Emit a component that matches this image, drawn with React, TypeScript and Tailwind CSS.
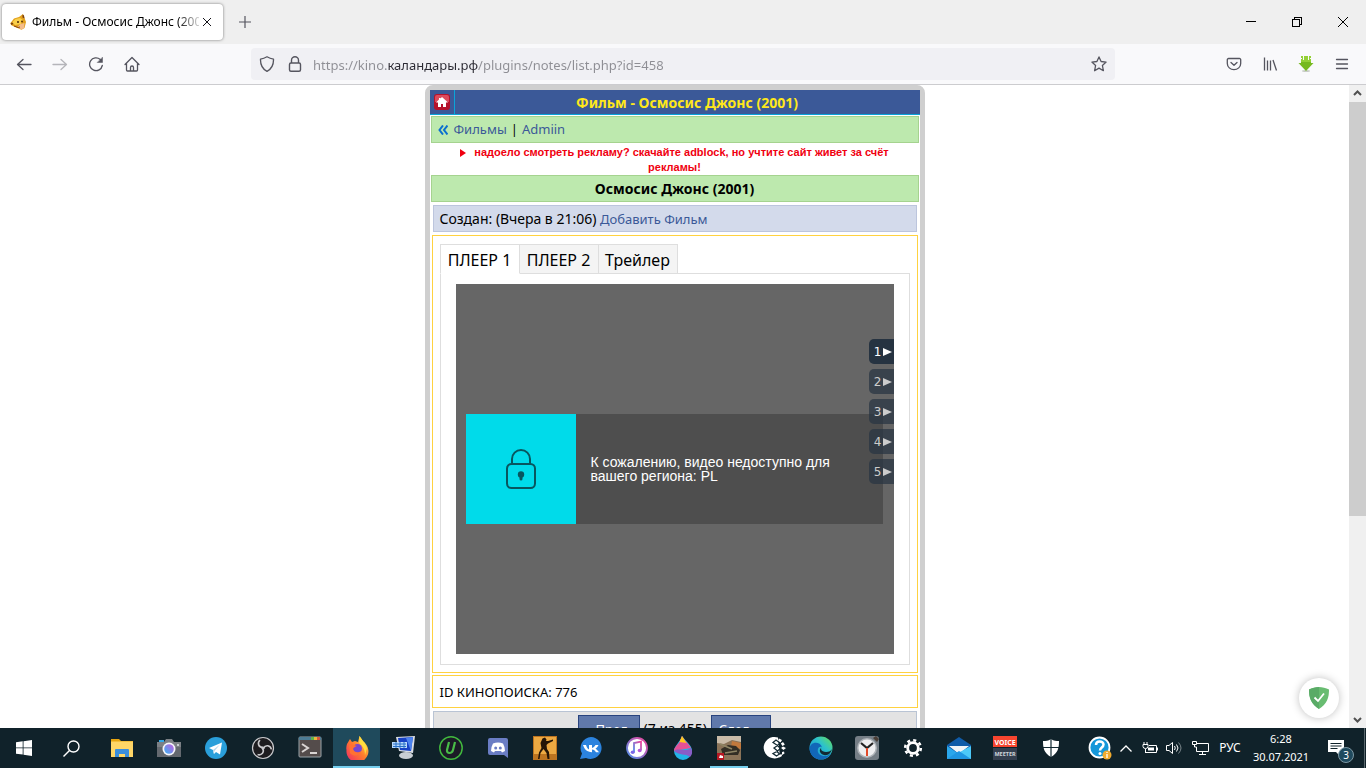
import type { ReactNode } from 'react';
import { clsx } from 'clsx';

const playerTabs = ['ПЛЕЕР 1', 'ПЛЕЕР 2', 'Трейлер'];
const sources = [1, 2, 3, 4, 5];

function ToolbarButton({ label, dim, children }: { label: string; dim?: boolean; children: ReactNode }) {
  return (
    <button aria-label={label} className={clsx('flex h-8 w-8 items-center justify-center rounded', dim ? 'text-[#b5b5ba]' : 'text-[#55555f]')}>
      <svg viewBox="0 0 16 16" className="h-4 w-4" fill="none" stroke="currentColor" strokeWidth="1.3" strokeLinecap="round" strokeLinejoin="round">
        {children}
      </svg>
    </button>
  );
}

function WindowButton({ label, children }: { label: string; children: ReactNode }) {
  return (
    <button aria-label={label} className="flex w-[46px] items-center justify-center">
      <svg viewBox="0 0 10 10" className="h-2.5 w-2.5" fill="none" stroke="#000" shapeRendering="crispEdges">
        {children}
      </svg>
    </button>
  );
}

function TabStrip() {
  return (
    <div className="flex h-11 shrink-0 items-stretch bg-[#efefef]">
      <div className="my-1 ml-0.5 flex w-[221px] items-center rounded bg-white pl-2 pr-2 shadow-[0_0_3px_rgba(0,0,0,0.5)]">
        <svg viewBox="0 0 16 16" className="mr-1.5 h-4 w-4 shrink-0">
          <path d="M.5 9 4 4.500 9 3l4-3 1.500 4L16 8l-1.500 6-3 1.800L4 12.500 1 11z" fill="#e2a01c" />
          <path d="M2 8.500 5.500 5 10 4l3 2-2 4-6 1z" fill="#f9cf4b" />
          <path d="m10.500 10 4-1-.5 5-2.500 1.500-4-2.500z" fill="#f4bd8d" />
          <path d="m12.500.5 1.500 1 .5 3-2-1zM.5 9l2-.5 1 1.500-2 1z" fill="#7a3d10" />
          <circle cx="8" cy="8" r="1" fill="#4a2508" /><circle cx="12" cy="7.500" r=".9" fill="#4a2508" />
          <path d="m4 12 4 1.500 2-.5" stroke="#8a4510" fill="none" />
        </svg>
        <span className="flex-1 overflow-hidden whitespace-nowrap bg-[linear-gradient(90deg,#000_145px,transparent_172px)] bg-clip-text text-[12px] leading-4 text-transparent">
          Фильм - Осмосис Джонс (2001)
        </span>
        <button aria-label="Закрыть вкладку" className="flex h-4 w-4 items-center justify-center">
          <svg viewBox="0 0 8 8" className="h-2 w-2" stroke="#15141a" fill="none"><path d="m0 0 8 8M8 0 0 8" /></svg>
        </button>
      </div>
      <button aria-label="Новая вкладка" className="ml-1.5 flex w-8 items-center justify-center">
        <svg viewBox="0 0 12 12" className="h-3 w-3" stroke="#55555f" strokeWidth="1.2"><path d="M6 0v12M0 6h12" /></svg>
      </button>
      <div className="ml-auto flex">
        <WindowButton label="Свернуть"><path d="M0 4.500h10" /></WindowButton>
        <WindowButton label="Восстановить"><path d="M.5 2.500h7v7h-7zM2.500 2.500v-2h7v7h-2" /></WindowButton>
        <WindowButton label="Закрыть"><path d="m0 0 10 10M10 0 0 10" shapeRendering="auto" /></WindowButton>
      </div>
    </div>
  );
}

function Toolbar() {
  return (
    <div className="flex h-[41px] shrink-0 items-center border-b border-[#cccccf] bg-[#f9f9fb] px-2">
      <div className="flex gap-1">
        <ToolbarButton label="Назад"><path d="M15 8.500H1.500M7 3.500 1.500 8.500 7 13.500" /></ToolbarButton>
        <ToolbarButton label="Вперёд" dim><path d="M1 8.500h13.500M9 3.500 14.500 8.500 9 13.500" /></ToolbarButton>
        <ToolbarButton label="Обновить">
          <path d="M14.300 9.500a6.400 6.400 0 1 1-2-6" />
          <path d="M14.500 1.500v5h-5z" fill="currentColor" strokeWidth=".5" />
        </ToolbarButton>
        <ToolbarButton label="Домой">
          <path d="M1 8.500 8 1.500l7 7M2.500 7.500V14a1 1 0 0 0 1 1h9a1 1 0 0 0 1-1V7.500M6.500 15v-3.500a1.500 1.500 0 0 1 3 0V15" />
        </ToolbarButton>
      </div>
      <div className="mx-[103px] flex h-8 flex-1 items-center rounded bg-[#f0f0f4]">
        <button aria-label="Защита" className="flex h-8 w-8 items-center justify-center text-[#55555f]">
          <svg viewBox="0 0 16 16" className="h-4 w-4" fill="none" stroke="currentColor" strokeWidth="1.3" strokeLinejoin="round">
            <path d="M8 .8c2.500 1.500 4.200 2 6.500 2.300C14.700 8.500 12.500 13 8 15.300 3.500 13 1.300 8.500 1.500 3.100 3.800 2.800 5.500 2.300 8 .8z" />
          </svg>
        </button>
        <button aria-label="Соединение" className="flex h-8 w-6 items-center justify-center text-[#55555f]">
          <svg viewBox="0 0 16 16" className="h-4 w-4" fill="none" stroke="currentColor" strokeWidth="1.4">
            <rect x="2.500" y="7" width="11" height="8.300" rx="1.500" /><path d="M4.500 7V4.200a3.500 3.500 0 0 1 7 0V7" />
          </svg>
        </button>
        <input
          aria-label="Адрес"
          readOnly
          value="https://kino.каландары.рф/plugins/notes/list.php?id=458"
          className="ml-1.5 h-8 min-w-0 flex-1 bg-[linear-gradient(90deg,#8e8e94_74px,#2b2a33_74px,#2b2a33_165px,#8e8e94_165px)] bg-clip-text pt-0.5 text-[13px] text-transparent outline-none"
        />
        <button aria-label="В закладки" className="flex h-8 w-8 items-center justify-center text-[#55555f]">
          <svg viewBox="0 0 16 16" className="h-4 w-4" fill="none" stroke="currentColor" strokeWidth="1.300" strokeLinejoin="round">
            <path d="m8 .9 2.100 4.600 5 .6-3.700 3.400 1 5.200L8 12.100l-4.400 2.600 1-5.200L.9 6.100l5-.6z" />
          </svg>
        </button>
      </div>
      <div className="flex gap-1">
        <ToolbarButton label="Pocket">
          <path d="M2.500 2.500h11a1.200 1.200 0 0 1 1.200 1.200V7.500a6.700 6.200 0 0 1-13.400 0V3.700A1.200 1.200 0 0 1 2.500 2.500zM5 6.500l3 2.800 3-2.800" />
        </ToolbarButton>
        <ToolbarButton label="Библиотека"><path d="M2.500 1.500v13M5.500 4.500v10M8.500 4.500v10M11 4l3.500 10.500" strokeLinecap="butt" /></ToolbarButton>
        <button aria-label="Загрузчик" className="flex h-8 w-8 items-center justify-center">
          <svg viewBox="0 0 16 16" className="h-4 w-4">
            <ellipse cx="8" cy="15" rx="4" ry="1" fill="#c7ccc5" />
            <path d="M3 0h10v7h2.500L8 15 .5 7H3z" fill="#76b91f" />
            <path d="M3 0h10v6H3z" fill="#94d036" />
            <path d="M5.500 0v4M10.500 0v4M1 2.500h3M12 2.500h3" stroke="#f9f9fb" />
          </svg>
        </button>
        <ToolbarButton label="Меню"><path d="M2.500 3.500h11M2.500 8h11M2.500 12.500h11" /></ToolbarButton>
      </div>
    </div>
  );
}

function Player() {
  return (
    <div className="relative flex h-[370px] items-center bg-[#666] pl-2.5 pr-[11px]">
      <div className="flex h-[110px] flex-1 items-center bg-[#4e4e4e]">
        <div className="flex h-[110px] w-[110px] shrink-0 items-center justify-center bg-[#00dbea]">
          <svg viewBox="0 0 30 40" className="h-10 w-[30px]" fill="none" stroke="#08565f" strokeWidth="2">
            <rect x="1" y="15" width="28" height="24" rx="4.500" />
            <path d="M6 15V10a9 9 0 0 1 18 0v5" />
            <circle cx="15" cy="25.500" r="3.200" fill="#08565f" stroke="none" />
            <path d="M15 26v4" strokeWidth="3" strokeLinecap="round" />
          </svg>
        </div>
        <p className="px-[15px] font-['Liberation_Sans',Arial,sans-serif] text-[14px] leading-[14px] text-white">
          К сожалению, видео недоступно для вашего региона: PL
        </p>
      </div>
      <div className="absolute right-0 top-[55px] flex flex-col gap-[5px]">
        {sources.map((n) => (
          <button
            key={n}
            className={clsx(
              "flex h-[25px] w-[25px] items-center justify-end gap-px rounded-l-[5px] pr-0.5 font-['DejaVu_Sans',sans-serif] text-[12px] leading-4",
              n === 1 ? 'bg-[#263341] text-white' : 'bg-[#263341]/70 text-[#ccc]',
            )}
          >
            {n}
            <svg viewBox="0 0 9 8" className="h-2 w-[9px]" fill="currentColor"><path d="M0 0 9 4 0 8z" /></svg>
          </button>
        ))}
      </div>
    </div>
  );
}

function FilmPage() {
  return (
    <div className="w-[500px] shrink-0 self-start rounded-t-[8px] border-[5px] border-[#cfcfcf] bg-white font-['Noto_Sans',Tahoma,sans-serif] text-[14px] leading-[17px] text-black">
      <header className="flex h-[25px] items-stretch border-b border-[#0aa5d8] bg-[#3b5998]">
        <a href="#home" aria-label="Главная" className="flex w-[25px] items-center justify-center border-r border-[#0aa5d8]">
          <svg viewBox="0 0 16 16" className="h-4 w-4">
            <rect width="16" height="16" rx="3" fill="#b5122c" />
            <path d="M1 3a2 2 0 0 1 2-2h10a2 2 0 0 1 2 2v5H1z" fill="#dc4a5c" />
            <path d="m8 3 6 5.500h-2V13H9v-3H7v3H4V8.500H2L5 5.600V4h1.500v.4z" fill="#fff" />
          </svg>
        </a>
        <h1 className="flex-1 pr-6 pl-6 text-center text-[14px] leading-[26px] font-bold text-[#ffe81a]">Фильм - Осмосис Джонс (2001)</h1>
      </header>
      <nav className="mx-px mt-px flex h-[27px] items-center border border-[#a5d38f] bg-[#bde9ae] px-1.5 text-[13px]">
        <svg viewBox="0 0 10 10" className="mr-1.5 h-2.5 w-2.5" fill="none" stroke="#0b6fd0" strokeWidth="2"><path d="M5 .5 1.500 5 5 9.500M9.500.5 6 5l3.500 4.500" /></svg>
        <a href="#films" className="text-[#3b5998]">Фильмы</a>
        <span className="px-1">|</span>
        <a href="#admin" className="text-[#3b5998]">Admiin</a>
      </nav>
      <p className="px-5 pt-0.5 text-center font-['Liberation_Sans',Arial,sans-serif] text-[11px] leading-[15px] font-bold text-[#f00010]">
        <svg viewBox="0 0 6 8" className="mr-2 inline-block h-2 w-1.5" fill="#f00010"><path d="M0 0 6 4 0 8z" /></svg>
        надоело смотреть рекламу? скачайте adblock, но учтите сайт живет за счёт рекламы!
      </p>
      <h2 className="mx-px h-[27px] border border-[#a5d38f] bg-[#bde9ae] text-center text-[14px] leading-[25px] font-bold">Осмосис Джонс (2001)</h2>
      <div className="mx-[3px] mt-[3px] h-[27px] border border-[#bcc5dd] bg-[#d3daeb] px-1.5 leading-[25px]">
        Создан: (Вчера в 21:06) <a href="#add" className="text-[13px] text-[#3b5998]">Добавить Фильм</a>
      </div>
      <section className="mx-0.5 mt-[3px] border border-[#ffd240] px-[7px] pt-2 pb-[7px]">
        <div role="tablist" className="flex pl-px text-[16px] leading-[30px]">
          {playerTabs.map((tab, i) => (
            <button
              key={tab}
              role="tab"
              aria-selected={i === 0}
              className={clsx(
                '-mb-px -ml-px h-[30px] w-20 border border-[#dedede] text-center',
                i === 0 ? 'relative border-b-white bg-white' : 'bg-[#f4f4f4]',
              )}
            >
              {tab}
            </button>
          ))}
        </div>
        <div className="border border-[#dedede] px-[15px] py-2.5">
          <Player />
        </div>
      </section>
      <div className="mx-0.5 mt-0.5 h-[33px] border border-[#ffd240] px-[7px] text-[13px] leading-8">ID КИНОПОИСКА: 776</div>
      <div className="mx-[3px] mt-[3px] flex items-start justify-center gap-1 border border-[#b9c4d4] bg-[#e3e3e3] py-[3px] leading-[27px]">
        <a href="#prev" className="border border-[#29447e] bg-[#6079ab] px-[7px] text-[13px] text-white">« Пред.</a>
        <span>(7 из 455)</span>
        <a href="#next" className="border border-[#29447e] bg-[#6079ab] px-[7px] text-[13px] text-white">След. »</a>
      </div>
    </div>
  );
}

function ScrollBar() {
  return (
    <div className="flex w-[17px] shrink-0 flex-col bg-[#f0f0f0]">
      <svg viewBox="0 0 17 17" className="h-[17px] w-[17px]" fill="none" stroke="#505050" strokeWidth="2"><path d="m5 10 3.500-3.500L12 10" /></svg>
      <div className="h-[414px] bg-[#cdcdcd]" />
      <svg viewBox="0 0 17 17" className="mt-auto h-[17px] w-[17px]" fill="none" stroke="#505050" strokeWidth="2"><path d="m5 7 3.500 3.500L12 7" /></svg>
    </div>
  );
}

interface TaskIcon {
  name: string;
  art: ReactNode;
  active?: boolean;
  running?: boolean;
}

const taskIcons: TaskIcon[] = [
  { name: 'Проводник', art: <>
    <path d="M1 3h8l2 2h12v16H1z" fill="#e8a510" /><path d="M1 5.500h22V21H1z" fill="#ffd667" />
    <path d="M5 21v-7a1 1 0 0 1 1-1h12a1 1 0 0 1 1 1v7h-4v-3H9v3z" fill="#3b8edb" />
  </> },
  { name: 'Камера', art: <>
    <rect x="2" y="4" width="5" height="3" fill="#31a8e8" /><path d="M0 6h7l2-3h6l2 3h7v15H0z" fill="#7b8085" />
    <path d="M0 11h24v10H0z" fill="#64696f" /><circle cx="12" cy="13" r="6.500" fill="#f5f5fa" /><circle cx="12" cy="13" r="4.800" fill="url(#lens)" />
    <rect x="20" y="8" width="2" height="2" fill="#c8ccd0" />
  </> },
  { name: 'Telegram', art: <><circle cx="12" cy="12" r="11" fill="#2a9fda" /><path d="m5 12 13-5.500-2 12-4-2.500-2 2-1-4z" fill="#fff" /><path d="m9 14 7-5.500-5.500 6.500-.7 3z" fill="#b9d9ec" /></> },
  { name: 'OBS', art: <>
    <circle cx="12" cy="12" r="10.500" fill="#1d1c1f" stroke="#c9c9cc" strokeWidth="1.200" />
    <g fill="none" stroke="#c9c9cc" strokeWidth="1.600">
      <path d="M12 11.500C7.500 11.500 6 7 9 4" /><path d="M12 11.500C7.500 11.500 6 7 9 4" transform="rotate(120 12 12)" /><path d="M12 11.500C7.500 11.500 6 7 9 4" transform="rotate(240 12 12)" />
    </g>
    <circle cx="12" cy="12" r="1.600" fill="#c9c9cc" />
  </> },
  { name: 'Терминал', art: <>
    <rect x="1" y="1" width="22" height="20" rx="1" fill="#544c4b" stroke="#9aa4a9" /><path d="M1 1h22v3H1z" fill="#4d7c95" />
    <path d="M13 1h3v3h-3z" fill="#61b34b" /><path d="M16 1h3v3h-3z" fill="#e8b93a" /><path d="M19 1h3v3h-3z" fill="#d8553f" />
    <path d="m4 8 6 4-6 4M12 17h7" fill="none" stroke="#dad5d3" strokeWidth="2" />
  </> },
  { name: 'Firefox', active: true, art: <>
    <path d="M2 8 5 3l2 3 3-1 3 1 1.500-6 3.500 5 3.500 4A11 11 0 1 1 1.500 14c-.5-2 0-4 .5-6z" fill="url(#fox)" />
    <path d="M14.500 0 18 5l2 2 2 5-2 7c0-7-3-9-6-12z" fill="#ffdc3e" />
    <circle cx="12.500" cy="12.500" r="4.500" fill="#7447d1" /><path d="M4 9c3-2 5 0 8 1-2 1-3 1-4 3 1 4 6 4 8 2-1 5-8 6-11 2z" fill="#ff7131" />
  </> },
  { name: 'Монитор', art: <>
    <path d="m4 1 19-1-2 17-14-2z" fill="#d9dde3" /><path d="m6 2 15-1-2 14-11-1z" fill="#1742c6" /><path d="m14 2 7-1-2 14z" fill="#4c83ee" />
    <path d="M0 6h15v6H0z" fill="#b9d9fa" /><path d="M1 8h13M1 10.500h13M4 6v6M8 6v6M12 6v6" stroke="#2871c8" /><ellipse cx="14" cy="19.500" rx="7" ry="3.500" fill="#c9ced3" />
  </> },
  { name: 'uTorrent', art: <>
    <circle cx="12" cy="12" r="11.200" fill="#1b1c26" stroke="#41b83e" strokeWidth="1.500" />
    <path d="M10 6 8 14c-.6 4 5 4 6 0l2-8" fill="none" stroke="#49bd48" strokeWidth="2.200" />
  </> },
  { name: 'Discord', art: <>
    <path d="M4 2h16a2 2 0 0 1 2 2v18l-4-3H4a2 2 0 0 1-2-2V4a2 2 0 0 1 2-2z" fill="#6a7dc4" />
    <path d="M7 7.500q5-2 10 0 2 3.500 2 7.500l-3 1.500-1-1.500H9l-1 1.500L5 15q0-4 2-7.500z" fill="#fff" /><circle cx="9.700" cy="12" r="1.500" fill="#6a7dc4" /><circle cx="14.300" cy="12" r="1.500" fill="#6a7dc4" />
  </> },
  { name: 'Counter-Strike', art: <>
    <rect x="0" y="0" width="24" height="24" fill="#bd7420" /><rect x="1" y="1" width="22" height="17" fill="#eda942" />
    <path d="M9.500 2.500 12 1.500l1.500 2-.5 1.500h2l5-1.500v1.500l-5 2.500-1.500 1.500.5 4 2 3 .5 7h-2l-1-6-3-4-3 4-1 6H5l1-6.500L8.500 12l-1-5z" fill="#251507" />
  </> },
  { name: 'VK', art: <>
    <path d="M12 1a11 11 0 1 1-5 21l-6 1 2-5.500A11 11 0 0 1 12 1z" fill="#2b83de" />
    <path d="M4 9h3c1 3 2 4 3 4.500V9h3v3c1.500-.5 2.500-1.500 3.500-3h3c-.5 1.500-2 3-3 3.700 1 .6 2.700 2 3.500 3.500H17c-1-1.500-2-2.500-4-2.700v2.700C8 16 5.500 13.500 4 9z" fill="#fff" />
  </> },
  { name: 'iTunes', art: <>
    <circle cx="12" cy="12" r="10" fill="#fff" stroke="url(#tunes)" strokeWidth="1.800" />
    <path d="M9 16V7l7-1.500V14" fill="none" stroke="url(#tunes)" strokeWidth="1.800" /><ellipse cx="7.700" cy="16.300" rx="2" ry="1.700" fill="#7b67e8" /><ellipse cx="14.700" cy="14.500" rx="2" ry="1.700" fill="#b256d9" />
  </> },
  { name: 'Paint 3D', art: <>
    <path d="M11 0c4 6 10 9 10 15a9 9 0 0 1-18 0c0-5 6-9 8-15z" fill="#23b4e8" /><path d="M9 5C7 9 3 11 3 15l17-3C18 8 13 4 11 0z" fill="#e65196" />
    <path d="M3 15c5-4 10 2 17-3 2 4 1 7-1 9-5-4-10-1-16-6z" fill="#8a5dc7" /><path d="M11 0 8.500 6l7 1z" fill="#ffc91e" />
  </> },
  { name: 'World of Tanks', running: true, art: <>
    <rect x="0" y="0" width="24" height="24" fill="#8a7358" /><path d="M0 0h24v6l-9-2-8 4-7-1z" fill="#c9bba8" /><path d="m15 5 9 2v6l-10-2z" fill="#c2793d" />
    <path d="m4 13 7-4 8 1 4 4-2 5H6z" fill="#332e25" /><path d="m3 8 12 5M8 17l12-2" stroke="#8e8565" strokeWidth="1.500" />
    <path d="M0 17h7v7H0z" fill="#b71722" /><path d="m2 22 1-3 3 1v2z" fill="#fff" />
  </> },
  { name: 'WebMoney', art: <>
    <path d="M15 1.500A10.800 10.800 0 1 0 17 21z" fill="#fff" />
    <g fill="#fff">
      <path d="M16 2.500 19 4l-1.500 2.500L15 5zM20 6l1.800 2.500-2.300 1.500-1.700-2.500zM18 12l2-1.500 3 1.500-2.500 2zM19 16l2-.5.500 2-2.500 1.500zM16 19l2.500-1 .5 2-2.500 1.500z" />
    </g>
    <path d="M10 6.500 13 4l4 3-2.500 2.500zM11 12l3.500-2.500 3 3-3 2.500zM10 17.500l4-2 2.500 2.500-3 2z" fill="none" stroke="#132a33" strokeWidth="1.300" />
  </> },
  { name: 'Edge', art: <>
    <circle cx="12" cy="12" r="11.500" fill="url(#edge)" /><path d="M.5 13C1 5 11 5 13 11c-5-2-7 8 2 9 3 .5 5-1 7-3-4 9-20 9-21.500-4z" fill="#1267b8" />
    <path d="M13 11c-2 1-1 5 4 5 3 0 5-1 6-3-1 4-4 7-8 6s-6-5-2-8z" fill="#132a33" />
  </> },
  { name: 'Часы', art: <>
    <rect x="0" y="0" width="24" height="24" rx="3" fill="#757e86" /><path d="m18 2 3-2 3 3-2 3z" fill="#4a3e36" /><circle cx="12" cy="12" r="10" fill="#aeb3b8" /><circle cx="12" cy="12" r="8.500" fill="#eeeef0" />
    <path d="m6 7 6 5 6-5" fill="none" stroke="#222" strokeWidth="2.200" /><path d="M12 12v8" stroke="#e24a2a" strokeWidth="2" />
  </> },
  { name: 'Параметры', art: <>
    <circle cx="12" cy="12" r="5.300" fill="none" stroke="#fff" strokeWidth="2.800" />
    <circle cx="12" cy="12" r="7.800" fill="none" stroke="#fff" strokeWidth="2.600" strokeDasharray="3.060 3.060" />
  </> },
  { name: 'Почта', art: <>
    <path d="M0 9 12 1l12 8v14H0z" fill="#0f5ba8" /><path d="M2 10h20l-10 8z" fill="#f1f4f7" /><path d="m0 10 12 8-12 5z" fill="#2aa7ec" /><path d="m24 10-24 13h24z" fill="#4cc9f8" /><path d="m0 23 12-8 12 8z" fill="#1f96e2" />
  </> },
  { name: 'Voicemeeter', art: <>
    <rect x="0" y="0" width="24" height="11" fill="#f8452f" /><rect x="0" y="12" width="24" height="12" fill="#343f4f" />
    <text x="12" y="8.500" fontSize="7" fontWeight="bold" textAnchor="middle" fill="#fff">VOICE</text>
    <text x="12" y="20" fontSize="5.500" fontWeight="bold" textAnchor="middle" fill="#cfd4da">MEETER</text>
  </> },
  { name: 'Защитник', art: <>
    <path d="M12 3c3 2 5 2 8 2 0 7-1 12-8 16-7-4-8-9-8-16 3 0 5 0 8-2z" fill="#fff" /><path d="M12 3v18M4 11.500h16" stroke="#132a33" strokeWidth="1.200" />
  </> },
];

function TaskBar() {
  return (
    <footer className="flex h-10 shrink-0 bg-[#10222a] text-white">
      <svg className="h-0 w-0">
        <defs>
          <linearGradient id="lens" x1="0" y1="1" x2="1" y2="0"><stop stopColor="#38b6f3" /><stop offset="1" stopColor="#c25de0" /></linearGradient>
          <linearGradient id="fox" x1="1" y1="0" x2="0" y2="1"><stop stopColor="#ffe14a" /><stop offset=".5" stopColor="#ff7b2c" /><stop offset="1" stopColor="#f0246b" /></linearGradient>
          <linearGradient id="tunes" x1="0" y1="1" x2="1" y2="0"><stop stopColor="#4b92ee" /><stop offset="1" stopColor="#f0439b" /></linearGradient>
          <linearGradient id="edge" x1="0" y1="1" x2="1" y2="0"><stop stopColor="#1487d8" /><stop offset=".6" stopColor="#2cc2cc" /><stop offset="1" stopColor="#6be052" /></linearGradient>
        </defs>
      </svg>
      <button aria-label="Пуск" className="flex w-12 items-center justify-center">
        <svg viewBox="0 0 16 16" className="h-4 w-4" fill="#fff"><path d="m0 2.200 6.700-.9v6.200H0zM7.500 1.200 16 0v7.500H7.500zM0 8.300h6.700v6.300L0 13.700zM7.500 8.300H16V16l-8.500-1.200z" /></svg>
      </button>
      <button aria-label="Поиск" className="flex w-[50px] items-center justify-center pr-1">
        <svg viewBox="0 0 17 17" className="h-[17px] w-[17px]" fill="none" stroke="#fff" strokeWidth="1.400"><circle cx="10.500" cy="6.500" r="5.500" /><path d="M6.500 10.500.5 16.500" /></svg>
      </button>
      {taskIcons.map((icon, i) => (
        <button
          key={icon.name}
          aria-label={icon.name}
          className={clsx(
            'flex shrink-0 items-center justify-center border-y-2 border-t-transparent',
            icon.running ? 'mx-1 w-[38px]' : i < 10 ? 'w-[47px]' : 'w-[46px]',
            icon.active && 'bg-[#1f4a5c]',
            icon.active || icon.running ? 'border-b-[#76cfee]' : 'border-b-transparent',
          )}
        >
          <svg viewBox="0 0 24 24" className="h-6 w-6">{icon.art}</svg>
        </button>
      ))}
      <div className="ml-auto flex items-center text-[12px]">
        <button aria-label="Справка" className="flex h-10 w-7 items-center justify-center">
          <svg viewBox="0 0 24 24" className="h-6 w-6">
            <circle cx="11.500" cy="11.500" r="10" fill="#1597d9" stroke="#fff" strokeWidth="1.800" />
            <path d="M8 9c0-5 7.500-4.500 7.500-.5 0 3-3.500 3-3.500 6" fill="none" stroke="#fff" strokeWidth="2.500" /><circle cx="12" cy="17.500" r="1.500" fill="#fff" />
            <circle cx="19" cy="19" r="4.500" fill="#f1ab2e" /><path d="M19 18v4M19 16v1" stroke="#fff" strokeWidth="1.300" />
          </svg>
        </button>
        <button aria-label="Скрытые значки" className="flex h-10 w-6 items-center justify-center">
          <svg viewBox="0 0 12 7" className="h-[7px] w-3" fill="none" stroke="#fff" strokeWidth="1.300"><path d="m.5 6.500 5.500-5.500 5.500 5.500" /></svg>
        </button>
        <button aria-label="Питание" className="flex h-10 w-6 items-center justify-center">
          <svg viewBox="0 0 16 12" className="h-3 w-4" fill="none" stroke="#fff">
            <path d="M7 3.500h7.500v7H3.500V8M15.500 5.500v3M2 0v2M5 0v2M1 2.500h5v2a2.500 2 0 0 1-5 0zM3.500 7v4" /><path d="M6 5.500h6v3H6z" fill="#fff" stroke="none" />
          </svg>
        </button>
        <button aria-label="Громкость" className="flex h-10 w-6 items-center justify-center">
          <svg viewBox="0 0 16 14" className="h-3.5 w-4" fill="none" stroke="#fff">
            <path d="M.5 4.500h2.500l3.500-3v11l-3.500-3H.5zM8.500 5q1.500 2 0 4M10.500 3.500q3 3.500 0 7" /><path d="M12.500 1.500q5 5.500 0 11" stroke="#7a868b" />
          </svg>
        </button>
        <button aria-label="Сеть" className="flex h-10 w-7 items-center justify-center">
          <svg viewBox="0 0 17 14" className="h-3.5 w-[17px]" fill="none" stroke="#fff"><path d="M5 2.500h11.500v8H4.500V6M7 13.500h7M10.500 10.500v3M.5.500h4v3h-4zM2.500 3.500V6h2" /></svg>
        </button>
        <button className="h-10 w-8 text-center text-[12px]">РУС</button>
        <button className="flex h-10 w-[70px] flex-col items-center justify-center text-[11px] leading-[18px]">
          <span>6:28</span>
          <span>30.07.2021</span>
        </button>
        <button aria-label="Уведомления" className="relative flex h-10 w-12 items-center justify-center pr-2">
          <svg viewBox="0 0 16 16" className="h-4 w-4"><path d="M0 0h16v12h-4v4l-4-4H0z" fill="#fff" /><path d="M2.500 3.500h11M2.500 6h11M2.500 8.500h7" stroke="#10222a" /></svg>
          <span className="absolute top-[19px] right-2.5 h-4 w-4 rounded-full border border-[#7d98a4] bg-[#1f4a5e] text-center text-[10px] leading-[14px]">3</span>
        </button>
        <div className="mr-px h-10 w-px bg-[#5b686e]" />
      </div>
    </footer>
  );
}

export default function App() {
  return (
    <div className="flex h-screen flex-col overflow-hidden bg-white font-['Noto_Sans','Segoe_UI',sans-serif]">
      <TabStrip />
      <Toolbar />
      <main className="relative flex min-h-0 flex-1 overflow-hidden">
        <div className="flex min-w-0 flex-1 justify-center overflow-hidden">
          <FilmPage />
        </div>
        <button aria-label="AdGuard" className="absolute right-[27px] bottom-2.5 flex h-10 w-10 items-center justify-center rounded-full bg-white shadow-[0_0_8px_rgba(0,0,0,0.25)]">
          <svg viewBox="0 0 20 22" className="h-[22px] w-5">
            <path d="M10 0c3 0 7 1 10 2.500C20 11 18 17 10 22 2 17 0 11 0 2.500 3 1 7 0 10 0z" fill="#68bc71" />
            <path d="M10 0v22C2 17 0 11 0 2.500 3 1 7 0 10 0z" fill="#5aab67" />
            <path d="m5.500 10.500 3.500 3.500 6-7.500" fill="none" stroke="#fff" strokeWidth="1.800" />
          </svg>
        </button>
        <ScrollBar />
      </main>
      <TaskBar />
    </div>
  );
}
